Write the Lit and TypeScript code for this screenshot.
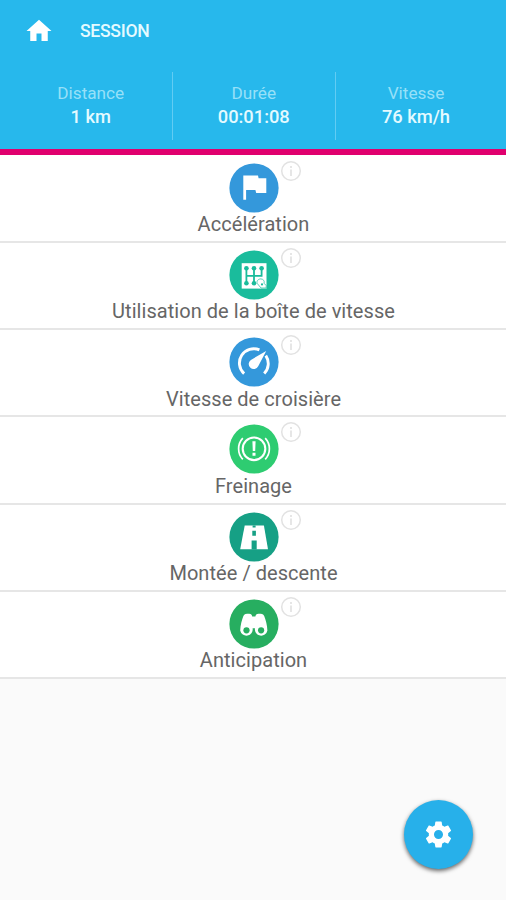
import { LitElement, html, css, svg } from "lit";
import { customElement } from "lit/decorators.js";

const flag = svg`<path fill="#fff" d="M14.3 12.4H29L29.6 15.2H37.3V30H27.2L26.4 27H17.1V36.7H14.3Z"/>`;

const gearbox = svg`
  <rect x="12.7" y="13.2" width="24.8" height="25.4" fill="#fff"/>
  <path fill="none" stroke="#1abc9c" stroke-width="1.8" d="M17.4 18.4V33.3M25 18.4V33.3M32.6 18.4V25.8H17.4"/>
  <g fill="#1abc9c">
    <circle cx="17.4" cy="18.2" r="2.3"/><circle cx="25" cy="18.2" r="2.3"/><circle cx="32.6" cy="18.2" r="2.3"/>
    <circle cx="17.4" cy="33.2" r="2.3"/><circle cx="25" cy="33.2" r="2.3"/>
  </g>
  <path fill="#fff" stroke="#1abc9c" stroke-width="0.7" d="M28.2 33.4C27.3 31 29.3 28.9 31.8 28.9C34.6 29 35.8 31.3 35 33.2L37.2 35.6V38H32Z"/>
  <circle cx="33" cy="34.4" r="1.1" fill="#1abc9c"/>`;

const gauge = svg`
  <path fill="none" stroke="#fff" stroke-width="2.9" d="M15.1 36.6A14.3 14.3 0 0 1 30.4 12.9M36.8 18.6A14.3 14.3 0 0 1 35.2 36.6"/>
  <path fill="#fff" d="M37.2 13.9L29.2 29.2A5 5 0 1 1 21.9 22.9Z"/>`;

const brake = svg`
  <g fill="none" stroke="#fff">
    <circle cx="25" cy="24.8" r="11.3" stroke-width="2.1"/>
    <path stroke-width="1.7" d="M13.8 14.2A15.5 15.5 0 0 0 13.8 35.4M36.2 14.2A15.5 15.5 0 0 1 36.2 35.4"/>
  </g>
  <path fill="#fff" d="M23.4 17.3H26.6L26.2 27H23.8ZM23.5 28.8H26.5V31.7H23.5Z"/>`;

const road = svg`
  <path fill="#fff" d="M15.7 13.5H34.9L39 37.3H11.2Z"/>
  <path fill="#16a085" d="M23.6 13.5H26.6V15.6H23.6ZM23.3 18.8H26.9V23.8H23.3ZM22.6 28.6H27.7V37.4H22.6Z"/>`;

const binoculars = svg`
  <path fill="#fff" d="M11.2 31.5C11.4 26 12.8 21 14.4 17C15.2 15 17.3 14.8 20.1 14.8C22.3 14.8 22.8 16 23.2 17.4H26.4C26.8 16 27.3 14.8 29.5 14.8C32.3 14.8 34.4 15 35.2 17C36.8 21 38.2 26 38.4 31.5A6.3 6.3 0 1 1 26 29.2H23.6A6.3 6.3 0 1 1 11.2 31.5Z"/>
  <circle cx="17.5" cy="31.3" r="3.1" fill="#27ae60"/><circle cx="32.1" cy="31.3" r="3.1" fill="#27ae60"/>`;

const stats = [
  { label: "Distance", value: "1 km" },
  { label: "Durée", value: "00:01:08" },
  { label: "Vitesse", value: "76 km/h" },
];

const criteria = [
  { name: "Accélération", color: "#3498db", icon: flag },
  { name: "Utilisation de la boîte de vitesse", color: "#1abc9c", icon: gearbox },
  { name: "Vitesse de croisière", color: "#3498db", icon: gauge },
  { name: "Freinage", color: "#2ecc71", icon: brake },
  { name: "Montée / descente", color: "#16a085", icon: road },
  { name: "Anticipation", color: "#27ae60", icon: binoculars },
];

@customElement("app-root")
export class AppRoot extends LitElement {
  static styles = css`
    :host {
      display: flex;
      flex-direction: column;
      box-sizing: border-box;
      height: 900px;
      background: #fafafa;
      font-family: Roboto, sans-serif;
      position: relative;
      overflow: hidden;
    }
    svg { display: block; flex: none; }
    header {
      box-sizing: border-box;
      height: 155px;
      background: #27b8ec;
      border-bottom: 6px solid #e0006e;
      color: #e4faff;
    }
    .bar {
      display: flex;
      align-items: center;
      height: 61px;
      padding-left: 24px;
      gap: 26px;
    }
    .title { font-size: 17.6px; font-weight: 500; letter-spacing: -0.3px; }
    .stats {
      display: grid;
      grid-template-columns: 171.5px 163.5px 1fr;
      height: 68px;
      margin-top: 11px;
    }
    .stat {
      display: flex;
      flex-direction: column;
      align-items: center;
      padding-top: 9px;
      line-height: 24px;
      box-sizing: border-box;
    }
    .stat + .stat { border-left: 1px solid #62ccf3; }
    .stat:first-child { padding-left: 10px; }
    .stat:last-child { padding-right: 10px; }
    .label { font-size: 17.2px; color: #97e0f8; }
    .value { font-size: 18.3px; font-weight: 500; }
    main { padding-top: 0.6px; background: #fff; }
    .row {
      box-sizing: border-box;
      height: 87.3px;
      padding-top: 7px;
      border-bottom: 2px solid #e6e6e6;
      background: #fff;
      display: flex;
      flex-direction: column;
      align-items: center;
    }
    .badge { position: relative; margin-left: 1px; }
    .info { position: absolute; left: 51px; top: -3px; }
    .name {
      font-size: 20px;
      line-height: 24px;
      margin-top: -0.6px;
      color: #666;
      letter-spacing: 0.05px;
      white-space: nowrap;
      padding-left: 1px;
    }
    .fab {
      position: absolute;
      right: 33.5px;
      bottom: 31px;
      width: 69px;
      height: 69px;
      border-radius: 50%;
      background: #27b0ea;
      box-shadow: 0 2px 4px rgba(0, 0, 0, 0.6);
      display: flex;
      align-items: center;
      justify-content: center;
    }
  `;

  render() {
    return html`
      <header>
        <div class="bar">
          <svg width="30" height="30" viewBox="0 0 24 24">
            <path fill="#fff" d="M10 20v-6h4v6h5v-8h3L12 3 2 12h3v8z"/>
          </svg>
          <span class="title">SESSION</span>
        </div>
        <div class="stats">
          ${stats.map((s) => html`
            <div class="stat">
              <span class="label">${s.label}</span>
              <span class="value">${s.value}</span>
            </div>`)}
        </div>
      </header>
      <main>
        ${criteria.map((c) => html`
          <div class="row">
            <div class="badge">
              <svg width="50" height="50" viewBox="0 0 50 50">
                <circle cx="25" cy="25" r="24.6" fill=${c.color}/>
                ${c.icon}
              </svg>
              <svg class="info" width="22" height="22" viewBox="0 0 22 22">
                <circle cx="11" cy="11" r="9.3" fill="none" stroke="#e2e2e2" stroke-width="1.5"/>
                <path fill="#e6e6e6" d="M10 6h2v2h-2zM10 9.6h2V16h-2z"/>
              </svg>
            </div>
            <span class="name">${c.name}</span>
          </div>`)}
      </main>
      <div class="fab">
        <svg width="31" height="31" viewBox="0 0 24 24">
          <path fill="#fff" d="M19.43 12.98c.04-.32.07-.64.07-.98s-.03-.66-.07-.98l2.11-1.65c.19-.15.24-.42.12-.64l-2-3.46c-.12-.22-.39-.3-.61-.22l-2.49 1c-.52-.4-1.08-.73-1.69-.98l-.38-2.65C14.46 2.18 14.25 2 14 2h-4c-.25 0-.46.18-.49.42l-.38 2.65c-.61.25-1.17.59-1.69.98l-2.49-1c-.23-.09-.49 0-.61.22l-2 3.46c-.13.22-.07.49.12.64l2.11 1.65c-.04.32-.07.65-.07.98s.03.66.07.98l-2.11 1.65c-.19.15-.24.42-.12.64l2 3.46c.12.22.39.3.61.22l2.49-1c.52.4 1.08.73 1.69.98l.38 2.65c.03.24.24.42.49.42h4c.25 0 .46-.18.49-.42l.38-2.65c.61-.25 1.17-.59 1.69-.98l2.49 1c.23.09.49 0 .61-.22l2-3.46c.12-.22.07-.49-.12-.64l-2.11-1.65zM12 15.5c-1.93 0-3.5-1.57-3.5-3.5s1.57-3.5 3.5-3.5 3.5 1.57 3.5 3.5-1.57 3.5-3.5 3.5z"/>
        </svg>
      </div>
    `;
  }
}
